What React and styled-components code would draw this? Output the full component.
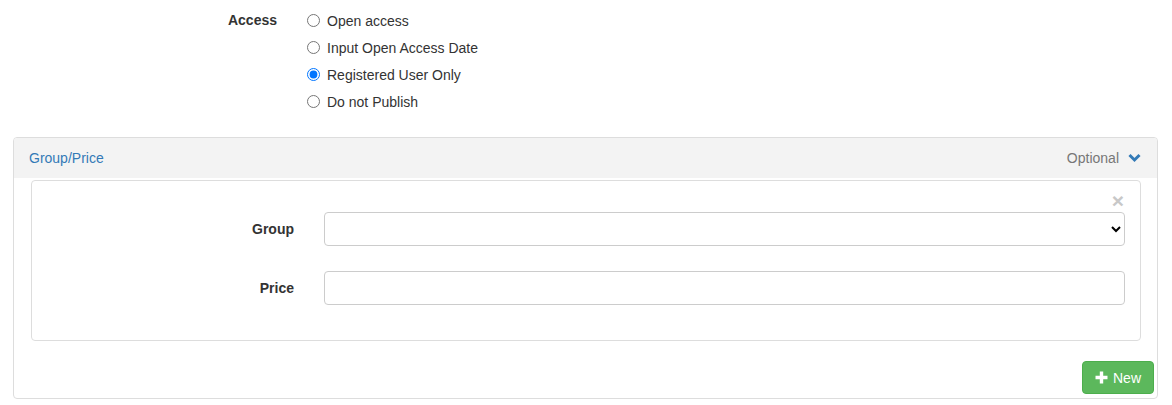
import React from 'react';
import styled, { createGlobalStyle } from 'styled-components';

const GlobalStyle = createGlobalStyle`
  body {
    margin: 0;
    font-family: "Liberation Sans", Arial, sans-serif;
    font-size: 14px;
    color: #333;
    background: #fff;
  }
  * { box-sizing: border-box; }
`;

const App = () => {
  const options = [
    { id: 'open', label: 'Open access' },
    { id: 'date', label: 'Input Open Access Date' },
    { id: 'registered', label: 'Registered User Only', checked: true },
    { id: 'none', label: 'Do not Publish' },
  ];

  return (
    <Page>
      <GlobalStyle />
      <AccessRow>
        <AccessLabel>Access</AccessLabel>
        <RadioList>
          {options.map((o) => (
            <RadioRow key={o.id}>
              <Radio type="radio" name="access" defaultChecked={o.checked} />
              {o.label}
            </RadioRow>
          ))}
        </RadioList>
      </AccessRow>

      <Panel>
        <PanelHeading>
          <HeadingTitle>Group/Price</HeadingTitle>
          <HeadingRight>
            Optional
            <svg width="13" height="10" viewBox="0 0 13 10">
              <path d="M1.5 2 L6.5 7 L11.5 2" fill="none" stroke="#337ab7" strokeWidth="3" />
            </svg>
          </HeadingRight>
        </PanelHeading>
        <PanelBody>
          <Well>
            <CloseButton>×</CloseButton>
            <FormRow>
              <FieldLabel>Group</FieldLabel>
              <Select defaultValue="">
                <option value=""></option>
              </Select>
            </FormRow>
            <FormRow>
              <FieldLabel>Price</FieldLabel>
              <Input type="text" />
            </FormRow>
          </Well>
          <Footer>
            <NewButton>
              <svg width="13" height="13" viewBox="0 0 13 13">
                <path d="M6.5 0.5 V12.5 M0.5 6.5 H12.5" stroke="#fff" strokeWidth="3.4" />
              </svg>
              New
            </NewButton>
          </Footer>
        </PanelBody>
      </Panel>
    </Page>
  );
};

export default App;

const Page = styled.div`
  width: 1172px;
  padding-top: 7px;
`;

const AccessRow = styled.div`
  display: flex;
  gap: 30px;
`;

const AccessLabel = styled.div`
  width: 277px;
  text-align: right;
  font-weight: bold;
  line-height: 27px;
  height: 27px;
`;

const RadioList = styled.div`
  display: flex;
  flex-direction: column;
`;

const RadioRow = styled.label`
  display: flex;
  align-items: center;
  gap: 7px;
  height: 27px;
`;

const Radio = styled.input`
  width: 13px;
  height: 13px;
  margin: 0;
`;

const Panel = styled.div`
  margin: 22px 14px 0 13px;
  border: 1px solid #ddd;
  border-radius: 4px;
  overflow: hidden;
`;

const PanelHeading = styled.div`
  display: flex;
  justify-content: space-between;
  align-items: center;
  height: 40px;
  padding: 0 16px 0 15px;
  background: #f3f3f3;
`;

const HeadingTitle = styled.span`
  color: #337ab7;
`;

const HeadingRight = styled.span`
  display: flex;
  align-items: center;
  gap: 9px;
  color: #777;
`;

const PanelBody = styled.div`
  padding: 2px 3px 4px 17px;
`;

const Well = styled.div`
  position: relative;
  margin-right: 13px;
  border: 1px solid #ddd;
  border-radius: 4px;
  padding: 31px 15px 35px 0;
  display: flex;
  flex-direction: column;
  gap: 25px;
`;

const CloseButton = styled.span`
  position: absolute;
  top: 9px;
  right: 16px;
  font-size: 21px;
  font-weight: bold;
  line-height: 1;
  color: #c8c8c8;
`;

const FormRow = styled.div`
  display: flex;
  align-items: center;
  gap: 30px;
`;

const FieldLabel = styled.label`
  width: 262px;
  text-align: right;
  font-weight: bold;
`;

const fieldStyles = `
  flex: 1;
  height: 34px;
  border: 1px solid #ccc;
  border-radius: 4px;
  background: #fff;
  font-family: inherit;
  font-size: 14px;
  padding: 6px 12px;
`;

const Select = styled.select`
  ${fieldStyles}
  padding: 6px 6px;
`;

const Input = styled.input`
  ${fieldStyles}
`;

const Footer = styled.div`
  display: flex;
  justify-content: flex-end;
  margin-top: 20px;
`;

const NewButton = styled.button`
  display: flex;
  align-items: center;
  gap: 5px;
  height: 33px;
  padding: 0 12px;
  background: #5cb85c;
  border: 1px solid #4cae4c;
  border-radius: 4px;
  color: #fff;
  font-family: inherit;
  font-size: 14px;
`;
